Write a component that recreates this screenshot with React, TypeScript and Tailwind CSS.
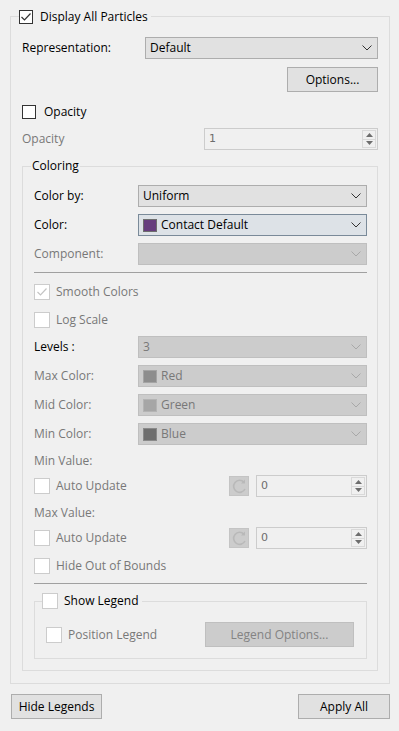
import type { ReactNode } from 'react'

const DIS = 'text-[#787878]'

function Chevron({ dim }: { dim?: boolean }) {
  return (
    <svg width="10" height="6" viewBox="0 0 10 6" className="shrink-0">
      <path d="M0.5 0.5 L5 5 L9.5 0.5" fill="none" stroke={dim ? '#a8a8a8' : '#333333'} strokeWidth="1" />
    </svg>
  )
}

function Combo({ children, kind = 'normal' }: { children?: ReactNode; kind?: 'normal' | 'focus' | 'disabled' }) {
  const cls =
    kind === 'disabled'
      ? 'bg-[#cccccc] border-[#bfbfbf] text-[#787878]'
      : kind === 'focus'
        ? 'bg-[#dde2e7] border-[#7a8a99] text-black'
        : 'bg-[#e1e1e1] border-[#adadad] text-black'
  return (
    <div className={`flex-1 h-[22px] border flex items-center pl-[4px] pr-[5px] ${cls}`}>
      <div className="flex-1 flex items-center gap-[4px] min-w-0">{children}</div>
      <Chevron dim={kind === 'disabled'} />
    </div>
  )
}

function Swatch({ fill, edge }: { fill: string; edge: string }) {
  return <span className="w-[14px] h-[13px] border shrink-0" style={{ background: fill, borderColor: edge }} />
}

function Check({ checked, size = 16, dim }: { checked?: boolean; size?: 14 | 16; dim?: boolean }) {
  const box = size === 14 ? 'w-[14px] h-[14px]' : 'w-[16px] h-[16px]'
  const edge = dim ? 'border-[#cccccc]' : 'border-[#333333]'
  return (
    <span className={`${box} ${edge} border bg-white shrink-0 flex items-center justify-center`}>
      {checked && (
        <svg width="12" height="10" viewBox="0 0 12 10">
          <path d="M1.5 5 L4.5 8 L10.5 1.5" fill="none" stroke={dim ? '#c4c4c4' : '#333333'} strokeWidth="1.2" />
        </svg>
      )}
    </span>
  )
}

function Spin({ value }: { value: string }) {
  return (
    <div className="flex-1 h-[22px] border border-[#cccccc] bg-[#f0f0f0] flex items-center pl-[4px] pr-[1px]">
      <span className="flex-1 text-[#6d6d6d] font-['DejaVu_Sans',sans-serif] text-[11px]">{value}</span>
      <div className="w-[14px] h-[18px] border border-[#d9d9d9] flex flex-col">
        <div className="flex-1 flex items-center justify-center">
          <svg width="7" height="4" viewBox="0 0 7 4"><path d="M0 4 L3.5 0 L7 4 Z" fill="#6d6d6d" /></svg>
        </div>
        <div className="flex-1 border-t border-[#d9d9d9] flex items-center justify-center">
          <svg width="7" height="4" viewBox="0 0 7 4"><path d="M0 0 L3.5 4 L7 0 Z" fill="#6d6d6d" /></svg>
        </div>
      </div>
    </div>
  )
}

function Reset() {
  return (
    <span className="w-[20px] h-[20px] bg-[#cccccc] border border-[#c4c4c4] flex items-center justify-center shrink-0">
      <svg width="16" height="16" viewBox="0 0 16 16">
        <path d="M13 4.2 A6 6 0 1 0 14 11" fill="none" stroke="#b9b9b9" strokeWidth="1.6" />
        <path d="M14 1.5 L14 5.5 L10 5.5 Z" fill="#b9b9b9" />
      </svg>
    </span>
  )
}

function Row({ label, dim, children }: { label: string; dim?: boolean; children: ReactNode }) {
  return (
    <div className="flex items-center h-[22px]">
      <span className={`w-[104px] shrink-0 ${dim ? DIS : 'text-black'}`}>{label}</span>
      {children}
    </div>
  )
}

function AutoRow() {
  return (
    <div className={`flex items-center h-[22px] mt-[6px] ${DIS}`}>
      <div className="flex-1 flex items-center gap-[6px]">
        <Check dim />
        <span>Auto Update</span>
      </div>
      <Reset />
      <div className="w-[111px] ml-[7px] flex">
        <Spin value="0" />
      </div>
    </div>
  )
}

export default function App() {
  return (
    <div className="w-[399px] h-[731px] bg-[#f0f0f0] font-['Open_Sans',sans-serif] text-[12px] leading-[16px] text-black pl-[10px] pr-[9px] pt-[9px] select-none">
      <fieldset className="border border-[#dcdcdc] pl-[11px] pr-[11px] pb-[11px] h-[675px]">
        <legend className="-ml-[3px] pr-[3px] flex items-center gap-[7px] h-[15px]">
          <Check checked size={14} />
          <span>Display All Particles</span>
        </legend>

        <div className="flex items-center h-[22px] mt-[13px]">
          <span className="w-[123px] shrink-0">Representation:</span>
          <Combo>Default</Combo>
        </div>

        <div className="flex justify-end mt-[8px]">
          <button className="w-[91px] h-[25px] bg-[#e1e1e1] border border-[#adadad]">Options...</button>
        </div>

        <div className="flex items-center gap-[8px] h-[16px] mt-[12px]">
          <Check size={14} />
          <span>Opacity</span>
        </div>

        <div className="flex items-center h-[22px] mt-[8px]">
          <span className={`w-[182px] shrink-0 ${DIS}`}>Opacity</span>
          <Spin value="1" />
        </div>

        <fieldset className="border border-[#dcdcdc] pl-[11px] pr-[10px] pb-[11px] mt-[8px]">
          <legend className="-ml-[3px] px-[1px] h-[16px]">Coloring</legend>

          <div className="mt-[11px] flex flex-col gap-[7px]">
            <Row label="Color by:">
              <Combo>Uniform</Combo>
            </Row>
            <Row label="Color:">
              <Combo kind="focus">
                <Swatch fill="#663d7d" edge="#6e6e6e" />
                <span>Contact Default</span>
              </Combo>
            </Row>
            <Row label="Component:" dim>
              <Combo kind="disabled" />
            </Row>
          </div>

          <div className="h-px bg-[#a0a0a0] mt-[7px]" />

          <div className={`flex items-center gap-[6px] h-[16px] mt-[11px] ${DIS}`}>
            <Check checked dim />
            <span>Smooth Colors</span>
          </div>
          <div className={`flex items-center gap-[6px] h-[16px] mt-[12px] ${DIS}`}>
            <Check dim />
            <span>Log Scale</span>
          </div>

          <div className="mt-[8px] flex flex-col gap-[7px]">
            <Row label="Levels :">
              <Combo kind="disabled">3</Combo>
            </Row>
            <Row label="Max Color:" dim>
              <Combo kind="disabled">
                <Swatch fill="#8d8d8d" edge="#a4a4a4" />
                <span>Red</span>
              </Combo>
            </Row>
            <Row label="Mid Color:" dim>
              <Combo kind="disabled">
                <Swatch fill="#a6a6a6" edge="#b4b4b4" />
                <span>Green</span>
              </Combo>
            </Row>
            <Row label="Min Color:" dim>
              <Combo kind="disabled">
                <Swatch fill="#6e6e6e" edge="#8a8a8a" />
                <span>Blue</span>
              </Combo>
            </Row>
          </div>

          <div className={`h-[16px] mt-[8px] ${DIS}`}>Min Value:</div>
          <AutoRow />

          <div className={`h-[16px] mt-[8px] ${DIS}`}>Max Value:</div>
          <AutoRow />

          <div className={`flex items-center gap-[6px] h-[16px] mt-[9px] ${DIS}`}>
            <Check dim />
            <span>Hide Out of Bounds</span>
          </div>

          <div className="h-px bg-[#a0a0a0] mt-[9px]" />

          <fieldset className="border border-[#dcdcdc] pl-[11px] pr-[12px] pb-[11px] mt-[9px]">
            <legend className="-ml-[4px] pr-[3px] flex items-center gap-[6px] h-[16px]">
              <Check dim />
              <span>Show Legend</span>
            </legend>
            <div className={`flex items-center h-[25px] mt-[13px] ${DIS}`}>
              <div className="flex-1 flex items-center gap-[6px]">
                <Check dim />
                <span>Position Legend</span>
              </div>
              <button className="w-[149px] h-[25px] bg-[#cccccc] border border-[#bfbfbf] text-[#838383]">Legend Options...</button>
            </div>
          </fieldset>
        </fieldset>
      </fieldset>

      <div className="flex justify-between items-center mt-[10px]">
        <button className="ml-[1px] w-[91px] h-[25px] bg-[#e1e1e1] border border-[#adadad]">Hide Legends</button>
        <button className="w-[92px] h-[25px] bg-[#e1e1e1] border border-[#adadad]">Apply All</button>
      </div>
    </div>
  )
}
